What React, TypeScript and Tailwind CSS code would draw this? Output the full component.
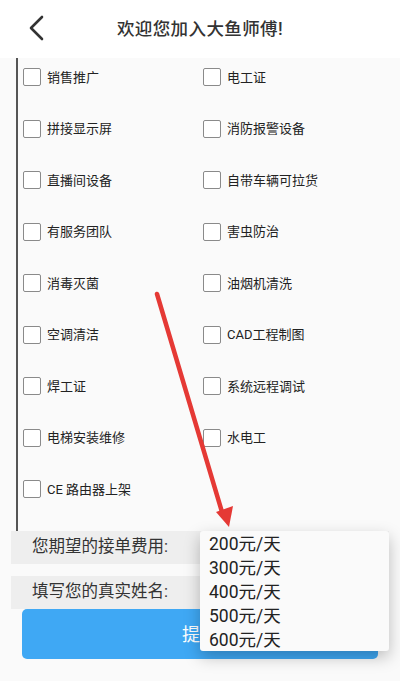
import React from "react";

const skills: [string, string | null][] = [
    ["销售推广", "电工证"],
    ["拼接显示屏", "消防报警设备"],
    ["直播间设备", "自带车辆可拉货"],
    ["有服务团队", "害虫防治"],
    ["消毒灭菌", "油烟机清洗"],
    ["空调清洁", "CAD工程制图"],
    ["焊工证", "系统远程调试"],
    ["电梯安装维修", "水电工"],
    ["CE 路由器上架", null],
];

const prices = ["200元/天", "300元/天", "400元/天", "500元/天", "600元/天"];

const CheckItem = ({ label }: { label: string }) => (
    <label className="flex items-center h-[18px]">
        <span className="w-[18px] h-[18px] border-[1.5px] border-[#8a8a8a] rounded-[2px] bg-white shrink-0" />
        <span className="ml-[6px] text-[13px] text-[#222] leading-none">{label}</span>
    </label>
);

export default function App() {
    return (
        <div
            className="relative w-[400px] h-[681px] overflow-hidden bg-[#fafafa]"
            style={{ fontFamily: 'Roboto, "Noto Sans CJK SC", sans-serif' }}
        >
            {/* header */}
            <div className="relative h-[58px] bg-white flex items-center justify-center">
                <svg
                    className="absolute left-[28px] top-[15px]"
                    width="18"
                    height="26"
                    viewBox="0 0 18 26"
                    fill="none"
                    stroke="#333"
                    strokeWidth="2.6"
                    strokeLinecap="round"
                    strokeLinejoin="round"
                >
                    <path d="M14 2 L3 13 L14 24" />
                </svg>
                <span className="text-[17.5px] font-medium text-[#333] tracking-[0.4px]">欢迎您加入大鱼师傅!</span>
            </div>

            {/* skills */}
            <div className="pl-[16px]">
                <div className="border-l-2 border-[#555] pl-[5px] pt-[10px] pb-[33px]">
                    <div className="grid grid-cols-[180px_1fr] gap-y-[33.5px]">
                        {skills.map(([a, b], i) => (
                            <React.Fragment key={i}>
                                <CheckItem label={a} />
                                {b ? <CheckItem label={b} /> : <div />}
                            </React.Fragment>
                        ))}
                    </div>
                </div>
            </div>

            {/* form rows */}
            <div className="mx-[11px] h-[33px] bg-[#eeeeee] flex items-center pl-[21px] text-[16.5px] text-[#333]">
                您期望的接单费用:
            </div>
            <div className="mx-[11px] mt-[12px] h-[33px] bg-[#eeeeee] flex items-center pl-[21px] text-[16.5px] text-[#333]">
                填写您的真实姓名:
            </div>
            <button className="mx-[22px] w-[356px] h-[50px] rounded-[5px] bg-[#3fa8f4] text-white text-[18px] flex items-center justify-center">
                提交
            </button>

            {/* dropdown */}
            <div className="absolute left-[200px] top-[531px] w-[189px] h-[120px] bg-[#fafafa] rounded-[3px] shadow-[0_6px_16px_rgba(0,0,0,0.25)] pt-[1px]">
                {prices.map((p) => (
                    <div key={p} className="h-[24px] flex items-center pl-[9px] text-[17.5px] text-[#222]">
                        {p}
                    </div>
                ))}
            </div>

            {/* annotation arrow */}
            <svg className="absolute left-0 top-0 pointer-events-none" width="400" height="681">
                <line x1="157" y1="294" x2="222" y2="512" stroke="#e53935" strokeWidth="4.5" strokeLinecap="round" />
                <polygon points="229,527 216,512 233,506" fill="#e53935" />
            </svg>
        </div>
    );
}
